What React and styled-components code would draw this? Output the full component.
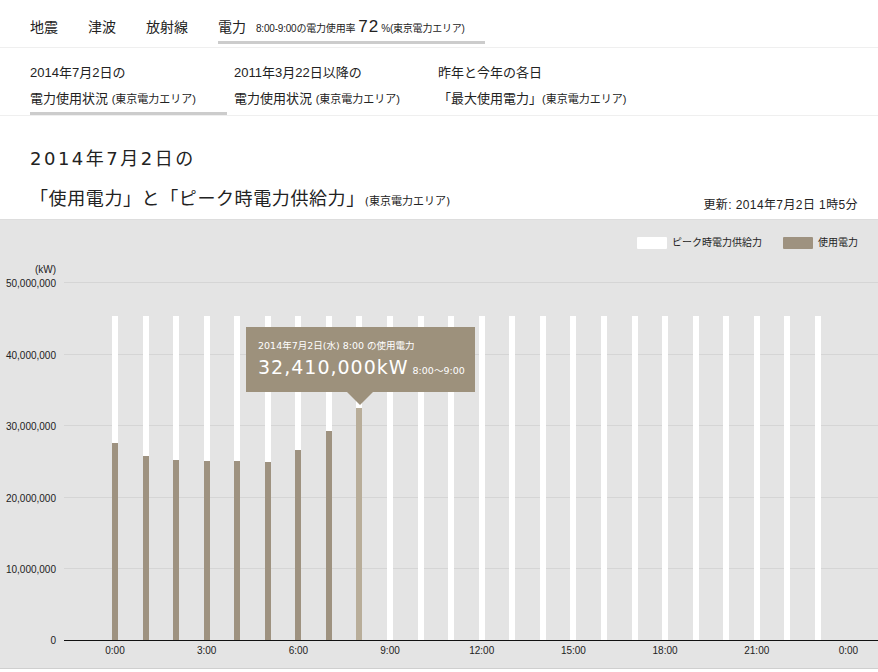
import React from "react";
import styled, { createGlobalStyle } from "styled-components";

const GlobalStyle = createGlobalStyle`
  html, body { margin: 0; padding: 0; background: #fff; }
  body {
    font-family: "Liberation Sans", "Noto Sans CJK JP", sans-serif;
    color: #222;
  }
`;

const Page = styled.div`
  width: 878px;
`;

const TopNav = styled.nav`
  display: flex;
  gap: 30px;
  height: 47px;
  padding-left: 30px;
  border-bottom: 1px solid #efefef;
`;

const NavItem = styled.div`
  display: flex;
  align-items: baseline;
  box-sizing: border-box;
  height: 44px;
  padding-top: 17px;
  padding-right: ${(p) => (p.$active ? "20px" : "0")};
  font-size: 14px;
  line-height: 20px;
  border-bottom: 3px solid ${(p) => (p.$active ? "#cccccc" : "transparent")};
  white-space: nowrap;
`;

const NavNote = styled.span`
  margin-left: 10px;
  font-size: 10px;
  letter-spacing: -0.2px;
`;

const NavRate = styled.span`
  font-size: 17px;
  margin: 0 2px 0 3px;
  letter-spacing: 1px;
`;

const SubNav = styled.nav`
  display: flex;
  gap: 7px;
  padding-left: 30px;
  border-bottom: 1px solid #efefef;
`;

const SubItem = styled.div`
  box-sizing: border-box;
  width: 197px;
  padding-top: 12px;
  font-size: 13px;
  line-height: 26px;
  border-bottom: 3px solid ${(p) => (p.$active ? "#cccccc" : "transparent")};
  white-space: nowrap;
`;

const Small = styled.span`
  font-size: ${(p) => p.$size || 11}px;
  line-height: 1;
  letter-spacing: 0;
`;

const Heading = styled.header`
  display: flex;
  justify-content: space-between;
  align-items: flex-end;
  box-sizing: border-box;
  height: 103px;
  padding: 24px 20px 0 30px;
`;

const Title = styled.h1`
  margin: 0;
  font-family: "DejaVu Sans", "Noto Sans CJK JP", sans-serif;
  font-weight: 400;
  font-size: 18px;
  color: #222;
`;

const TitleLine = styled.div`
  height: 40px;
  line-height: 40px;
  letter-spacing: ${(p) => p.$spacing}px;
  white-space: nowrap;
`;

const Updated = styled.div`
  font-size: 12px;
  line-height: 16px;
  margin-bottom: 6px;
  letter-spacing: 0.4px;
`;

const Panel = styled.section`
  position: relative;
  background: #e4e4e4;
  border-top: 1px solid #dddddd;
  border-bottom: 1px solid #cfcfcf;
`;

const Legend = styled.div`
  display: flex;
  justify-content: flex-end;
  gap: 21px;
  height: 40px;
  box-sizing: border-box;
  padding: 17px 20px 0 0;
`;

const LegendItem = styled.div`
  display: flex;
  align-items: flex-start;
  font-size: 10px;
  line-height: 12px;
  color: #222;
`;

const Swatch = styled.span`
  width: 30px;
  height: 12px;
  border-radius: 1px;
  margin-right: 5px;
  background: ${(p) => p.$color};
`;

const ChartSvg = styled.svg`
  display: block;
`;

const Tooltip = styled.div`
  position: absolute;
  left: 246px;
  top: 107px;
  width: 229px;
  height: 65px;
  box-sizing: border-box;
  padding: 12px 0 0 12px;
  background: #9d917c;
  color: #fff;
  font-family: "DejaVu Sans", "Noto Sans CJK JP", sans-serif;
  &::after {
    content: "";
    position: absolute;
    left: 101px;
    top: 65px;
    border-left: 13px solid transparent;
    border-right: 13px solid transparent;
    border-top: 13px solid #9d917c;
  }
`;

const TipLine = styled.div`
  font-size: 9.5px;
  line-height: 14px;
  white-space: nowrap;
`;

const TipValue = styled.div`
  display: flex;
  align-items: baseline;
  margin-top: 2px;
  font-size: 19px;
  line-height: 24px;
  letter-spacing: 1px;
  white-space: nowrap;
`;

const TipRange = styled.span`
  font-size: 9.5px;
  letter-spacing: 0;
  margin-left: 4px;
`;

const usage = [27.51, 25.7, 25.14, 25.0, 25.0, 24.86, 26.54, 29.19, 32.41];
const supply = 45.25;
const ZERO = 380;
const STEP = 71.6; // per 10,000,000 kW
const toY = (m) => ZERO - (m / 10) * STEP;
const cx = (i) => 115 + 30.56 * i;

const yTicks = [
  { v: 50, label: "50,000,000" },
  { v: 40, label: "40,000,000" },
  { v: 30, label: "30,000,000" },
  { v: 20, label: "20,000,000" },
  { v: 10, label: "10,000,000" },
];

const xTicks = [0, 3, 6, 9, 12, 15, 18, 21, 24];

function Chart() {
  const labelStyle = {
    fontFamily: '"Liberation Sans", sans-serif',
    fontSize: 10,
    fill: "#222",
  };
  return (
    <ChartSvg width="878" height="408" viewBox="0 0 878 408">
      {yTicks.map((t) => {
        const y = Math.round(toY(t.v)) + 0.5;
        return (
          <g key={t.v}>
            <line x1="64" x2="878" y1={y} y2={y} stroke="#d5d5d5" strokeWidth="1" />
            <text x="56" y={y + 4} textAnchor="end" style={labelStyle}>
              {t.label}
            </text>
          </g>
        );
      })}
      <text x="56" y="13" textAnchor="end" style={labelStyle}>
        (kW)
      </text>
      <text x="56" y={ZERO + 4} textAnchor="end" style={labelStyle}>
        0
      </text>
      {Array.from({ length: 24 }).map((_, i) => {
        const x = Math.round(cx(i) - 3);
        const sTop = Math.round(toY(supply));
        const u = usage[i];
        const uTop = u !== undefined ? Math.round(toY(u)) : null;
        return (
          <g key={i}>
            <rect x={x} y={sTop} width="6" height={ZERO - sTop} fill="#ffffff" />
            {uTop !== null && (
              <rect
                x={x}
                y={uTop}
                width="6"
                height={ZERO - uTop}
                fill={i === 8 ? "#b8ad99" : "#9e9280"}
              />
            )}
          </g>
        );
      })}
      <line x1="64" x2="878" y1={ZERO + 0.5} y2={ZERO + 0.5} stroke="#111" strokeWidth="1.2" />
      {xTicks.map((h) => (
        <text key={h} x={cx(h)} y={ZERO + 14} textAnchor="middle" style={labelStyle}>
          {h === 24 ? "0:00" : `${h}:00`}
        </text>
      ))}
    </ChartSvg>
  );
}

export default function App() {
  return (
    <Page>
      <GlobalStyle />
      <TopNav>
        <NavItem>地震</NavItem>
        <NavItem>津波</NavItem>
        <NavItem>放射線</NavItem>
        <NavItem $active>
          電力
          <NavNote>
            8:00-9:00の電力使用率<NavRate>72</NavRate>%(東京電力エリア)
          </NavNote>
        </NavItem>
      </TopNav>
      <SubNav>
        <SubItem $active>
          2014年7月2日の
          <br />
          電力使用状況 <Small>(東京電力エリア)</Small>
        </SubItem>
        <SubItem>
          2011年3月22日以降の
          <br />
          電力使用状況 <Small>(東京電力エリア)</Small>
        </SubItem>
        <SubItem>
          昨年と今年の各日
          <br />
          「最大使用電力」<Small>(東京電力エリア)</Small>
        </SubItem>
      </SubNav>
      <Heading>
        <Title>
          <TitleLine $spacing={2.5}>2014年7月2日の</TitleLine>
          <TitleLine $spacing={0.6}>
            「使用電力」と「ピーク時電力供給力」<Small $size={11}>(東京電力エリア)</Small>
          </TitleLine>
        </Title>
        <Updated>更新: 2014年7月2日 1時5分</Updated>
      </Heading>
      <Panel>
        <Legend>
          <LegendItem>
            <Swatch $color="#ffffff" />
            ピーク時電力供給力
          </LegendItem>
          <LegendItem>
            <Swatch $color="#9e9280" />
            使用電力
          </LegendItem>
        </Legend>
        <Chart />
        <Tooltip>
          <TipLine>2014年7月2日(水) 8:00 の使用電力</TipLine>
          <TipValue>
            32,410,000kW<TipRange>8:00～9:00</TipRange>
          </TipValue>
        </Tooltip>
      </Panel>
    </Page>
  );
}
